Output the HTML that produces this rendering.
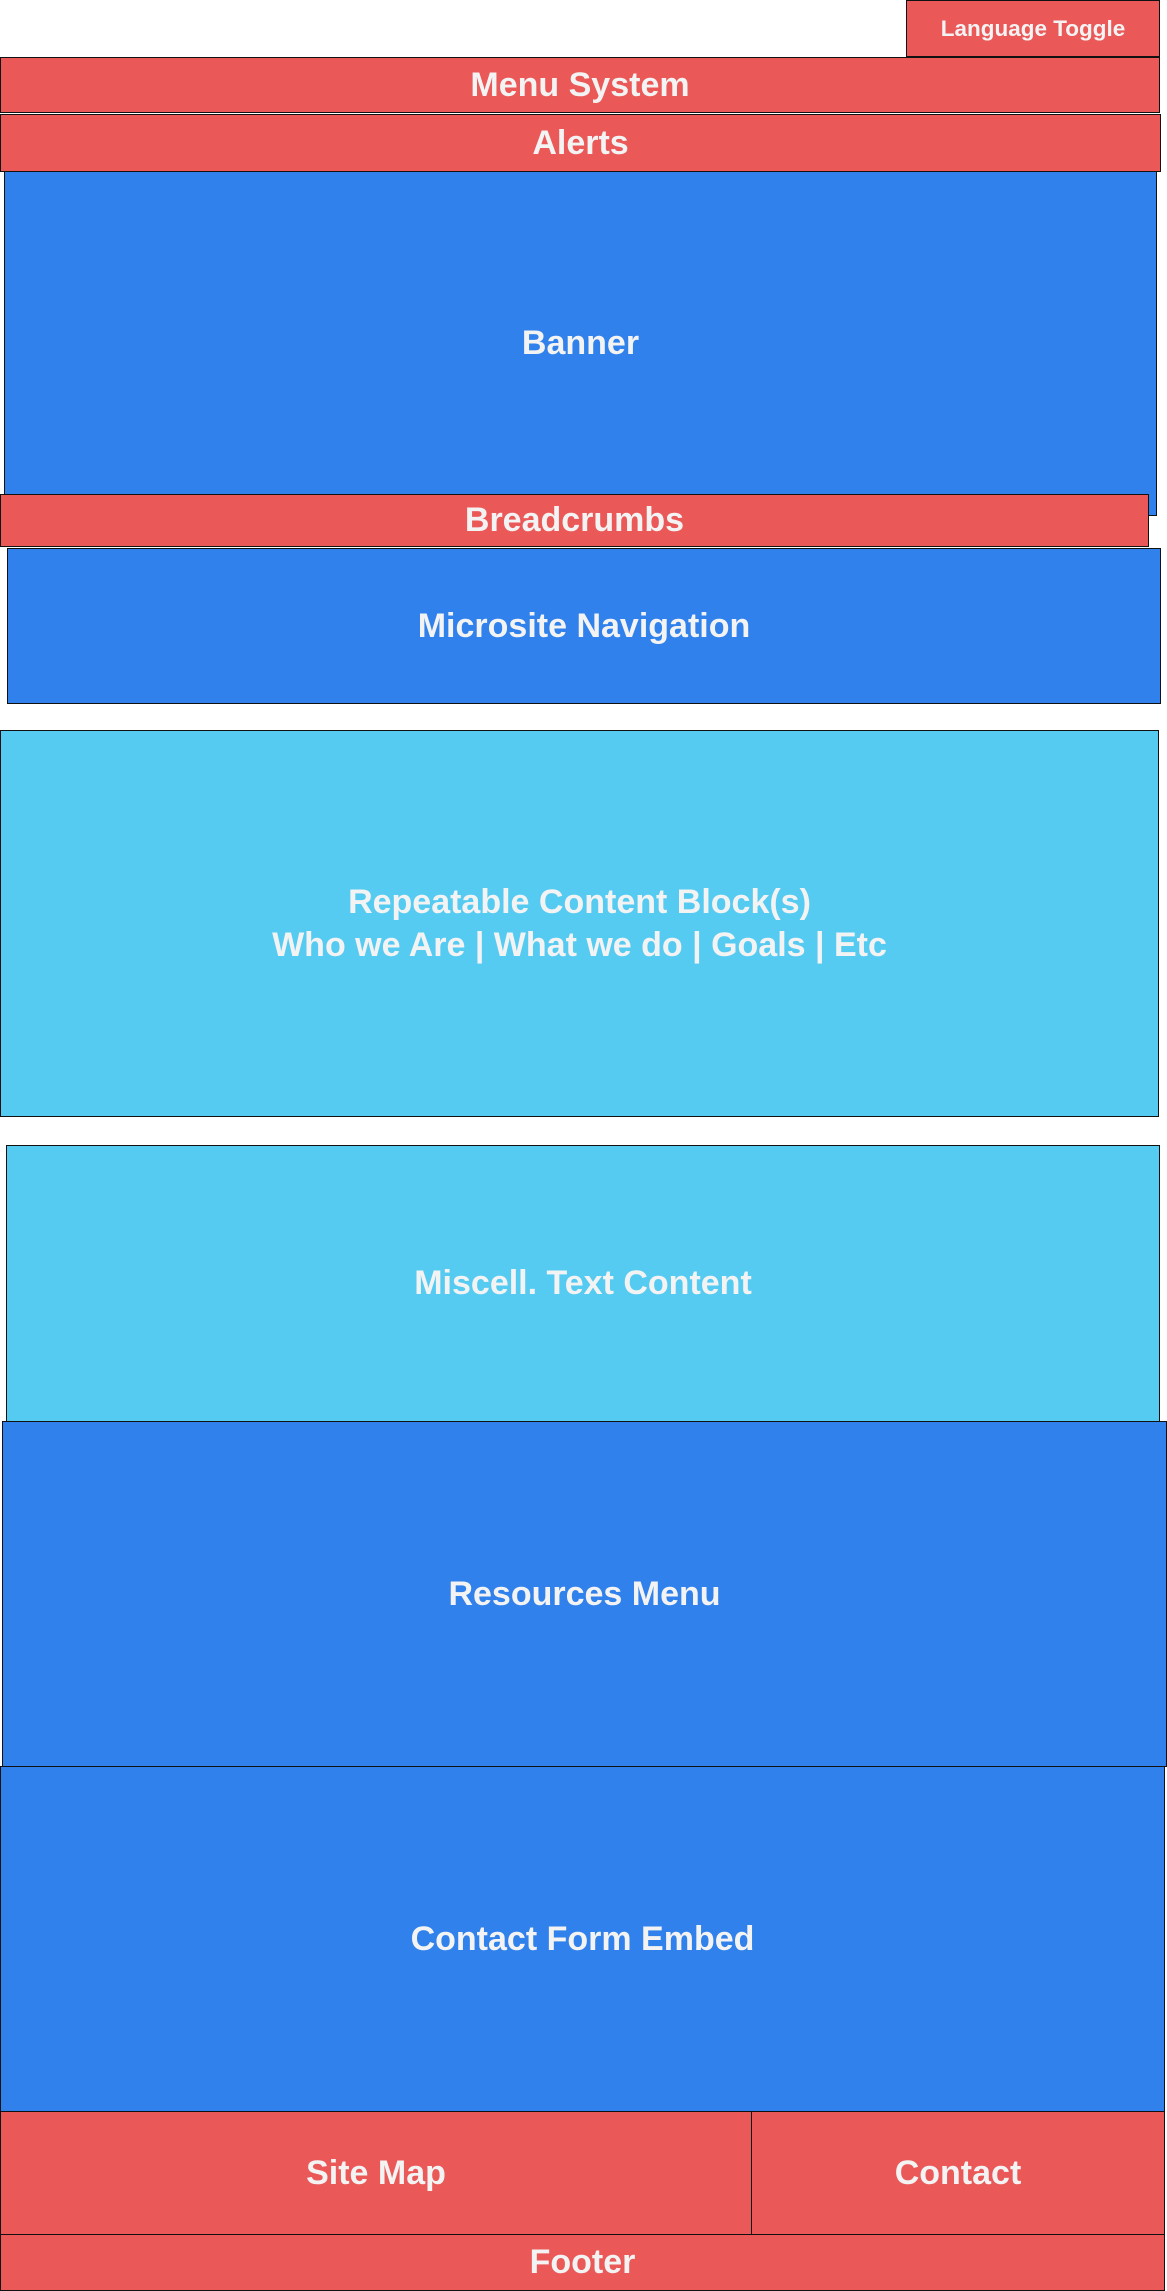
<!DOCTYPE html>
<html><head><meta charset="utf-8"><style>
html,body{margin:0;padding:0;background:#fff;}
body{width:1167px;height:2291px;position:relative;overflow:hidden;font-family:"Liberation Sans",Arial,sans-serif;}
.b{position:absolute;box-sizing:border-box;border:1.5px solid #111;display:flex;align-items:center;justify-content:center;text-align:center;color:#f3f3f3;font-weight:bold;font-size:34px;line-height:43px;}
.r{background:#ea5858;}
.bl{background:#3081eb;}
.lb{background:#56cbf2;}
</style></head><body>
<div class="b r" style="left:906px;top:0;width:254px;height:57px;font-size:22.5px;">Language Toggle</div>
<div class="b r" style="left:0;top:57px;width:1160px;height:56px;">Menu System</div>
<div class="b r" style="left:0;top:114px;width:1161px;height:58px;">Alerts</div>
<div class="b bl" style="left:4px;top:171px;width:1153px;height:345px;">Banner</div>
<div class="b r" style="left:0;top:494px;width:1149px;height:53px;">Breadcrumbs</div>
<div class="b bl" style="left:7px;top:548px;width:1154px;height:156px;">Microsite Navigation</div>
<div class="b lb" style="left:0;top:730px;width:1159px;height:387px;">Repeatable Content Block(s)<br>Who we Are | What we do | Goals | Etc</div>
<div class="b lb" style="left:6px;top:1145px;width:1154px;height:277px;">Miscell. Text Content</div>
<div class="b bl" style="left:2px;top:1421px;width:1165px;height:346px;">Resources Menu</div>
<div class="b bl" style="left:0;top:1766px;width:1165px;height:346px;">Contact Form Embed</div>
<div class="b r" style="left:0;top:2111px;width:752px;height:124px;">Site Map</div>
<div class="b r" style="left:751px;top:2111px;width:414px;height:124px;">Contact</div>
<div class="b r" style="left:0;top:2234px;width:1165px;height:57px;">Footer</div>
</body></html>
